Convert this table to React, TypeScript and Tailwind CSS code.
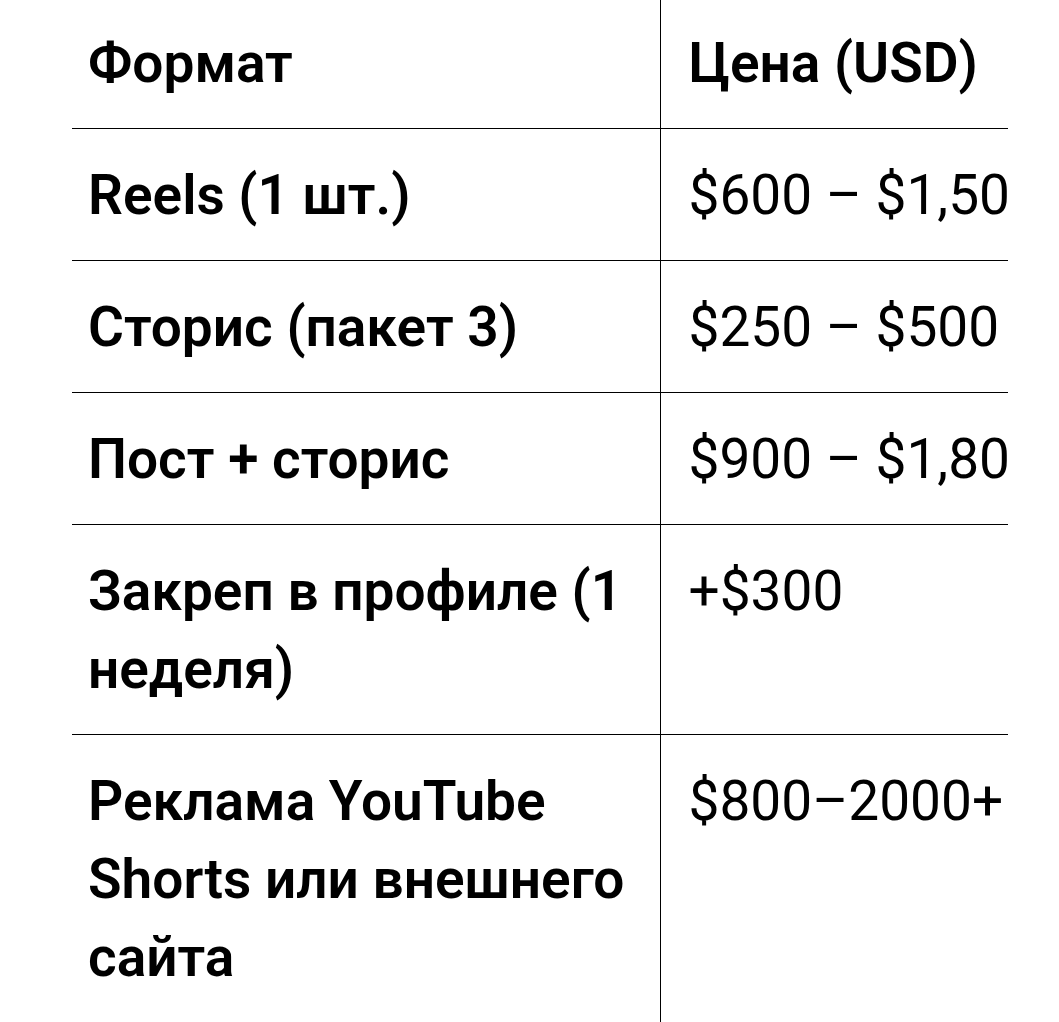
import React from "react";

const rows: [string, string][] = [
  ["Reels (1 шт.)", "$600 – $1,500"],
  ["Сторис (пакет 3)", "$250 – $500"],
  ["Пост + сторис", "$900 – $1,800"],
  ["Закреп в профиле (1 неделя)", "+$300"],
  ["Реклама YouTube Shorts или внешнего сайта", "$800–2000+"],
];

export default function App() {
  return (
    <div className="h-[1022px] bg-white overflow-hidden" style={{ fontFamily: "Roboto, 'Noto Sans', sans-serif" }}>
      <div className="ml-[72px] w-[936px] overflow-hidden -mt-[3px]">
        <table className="border-collapse text-[55px] leading-[78px] text-black">
          <thead>
            <tr className="border-b border-black">
              <th className="w-[588px] min-w-[588px] max-w-[588px] border-r border-black pl-[16px] pr-[16px] py-[26.5px] text-left align-top font-semibold">
                Формат
              </th>
              <th className="pl-[28px] pr-[16px] py-[26.5px] text-left align-top font-semibold whitespace-nowrap">
                Цена (USD)
              </th>
            </tr>
          </thead>
          <tbody>
            {rows.map(([a, b], i) => (
              <tr key={i} className={i < rows.length - 1 ? "border-b border-black" : ""}>
                <td className="w-[588px] min-w-[588px] max-w-[588px] border-r border-black pl-[16px] pr-[16px] py-[26.5px] text-left align-top font-semibold">
                  {a}
                </td>
                <td className="pl-[28px] pr-[16px] py-[26.5px] text-left align-top font-normal whitespace-nowrap">
                  {b}
                </td>
              </tr>
            ))}
            <tr>
              <td className="h-[200px] border-r border-black"></td>
              <td></td>
            </tr>
          </tbody>
        </table>
      </div>
    </div>
  );
}
